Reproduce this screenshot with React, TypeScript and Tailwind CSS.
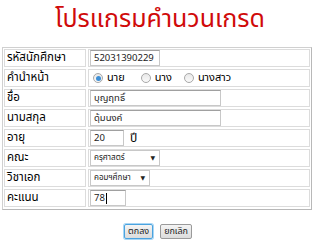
import React from "react";

const font = { fontFamily: 'Tahoma, "Noto Sans Thai", "Noto Sans", "DejaVu Sans", sans-serif' };

function Radio({ checked }: { checked?: boolean }) {
  return (
    <span className="inline-flex h-[10px] w-[10px] items-center justify-center rounded-full border border-[#a8a8a8] bg-gradient-to-b from-[#e8e8e8] to-[#fafafa]">
      {checked && <span className="h-[5px] w-[5px] rounded-full bg-[#3d8fd6]" />}
    </span>
  );
}

function Row({ label, children }: { label: string; children?: React.ReactNode }) {
  return (
    <div className="flex h-[18px] gap-[2px]">
      <div className="flex w-[82px] items-center border border-[#dcdcdc] pl-[2px] text-[11.5px] text-black">{label}</div>
      <div className="flex flex-1 items-center gap-[6px] border border-[#dcdcdc] pl-[1px] text-[11.5px]">{children}</div>
    </div>
  );
}

function Input({ w, value, cursor }: { w: string; value?: string; cursor?: boolean }) {
  return (
    <div className={`flex h-[16px] items-center border border-[#c8c8c8] border-t-[#a0a0a0] bg-white pl-[3px] text-[9.5px] text-[#222] ${w}`}>
      {value}
      {cursor && <span className="ml-[1px] h-[11px] w-px bg-black" />}
    </div>
  );
}

function Select({ w, value }: { w: string; value: string }) {
  return (
    <div className={`flex h-[16px] items-center justify-between border border-[#c8c8c8] bg-white pl-[3px] pr-[4px] text-[8px] text-[#222] ${w}`}>
      <span>{value}</span>
      <span className="text-[6px]">▼</span>
    </div>
  );
}

export default function App() {
  return (
    <div className="h-[245px] w-[320px] bg-white" style={font}>
      <div className="flex h-[47px] items-start justify-center pt-[7px] text-[25px] leading-none text-[#d00a0a]">
        โปรแกรมคำนวนเกรด
      </div>
      <div className="ml-[2px] flex w-[310px] flex-col gap-[2px] border border-[#d0d0d0] border-b-[#b8b8b8] border-r-[#b8b8b8] p-[1px] pb-[2px]">
        <Row label="รหัสนักศึกษา">
          <Input w="w-[70px]" value="52031390229" />
        </Row>
        <Row label="คำนำหน้า">
          <div className="flex items-center gap-[4px] pl-[3px] text-[11px]">
            <Radio checked />
            <span className="mr-[12px]">นาย</span>
            <Radio />
            <span className="mr-[8px]">นาง</span>
            <Radio />
            <span>นางสาว</span>
          </div>
        </Row>
        <Row label="ชื่อ">
          <Input w="w-[131px]" value="บุญฤทธิ์" />
        </Row>
        <Row label="นามสกุล">
          <Input w="w-[131px]" value="ดุ้มนงค์" />
        </Row>
        <Row label="อายุ">
          <Input w="w-[34px]" value="20" />
          <span className="text-[12px]">ปี</span>
        </Row>
        <Row label="คณะ">
          <Select w="w-[70px]" value="ครุศาสตร์" />
        </Row>
        <Row label="วิชาเอก">
          <Select w="w-[60px]" value="คอมฯศึกษา" />
        </Row>
        <Row label="คะแนน">
          <Input w="w-[36px]" value="78" cursor />
        </Row>
      </div>
      <div className="mt-[14px] flex justify-center gap-[7px] pr-[4px]">
        <button className="h-[15px] rounded-[2px] border border-[#4aa3df] bg-gradient-to-b from-[#f4f4f4] to-[#dcdcdc] px-[3px] text-[9px] leading-none text-[#222] shadow-[0_0_0_1px_#a9d6f5]">
          ตกลง
        </button>
        <button className="h-[15px] rounded-[2px] border border-[#9a9a9a] bg-gradient-to-b from-[#f4f4f4] to-[#dcdcdc] px-[3px] text-[9px] leading-none text-[#222]">
          ยกเลิก
        </button>
      </div>
    </div>
  );
}
